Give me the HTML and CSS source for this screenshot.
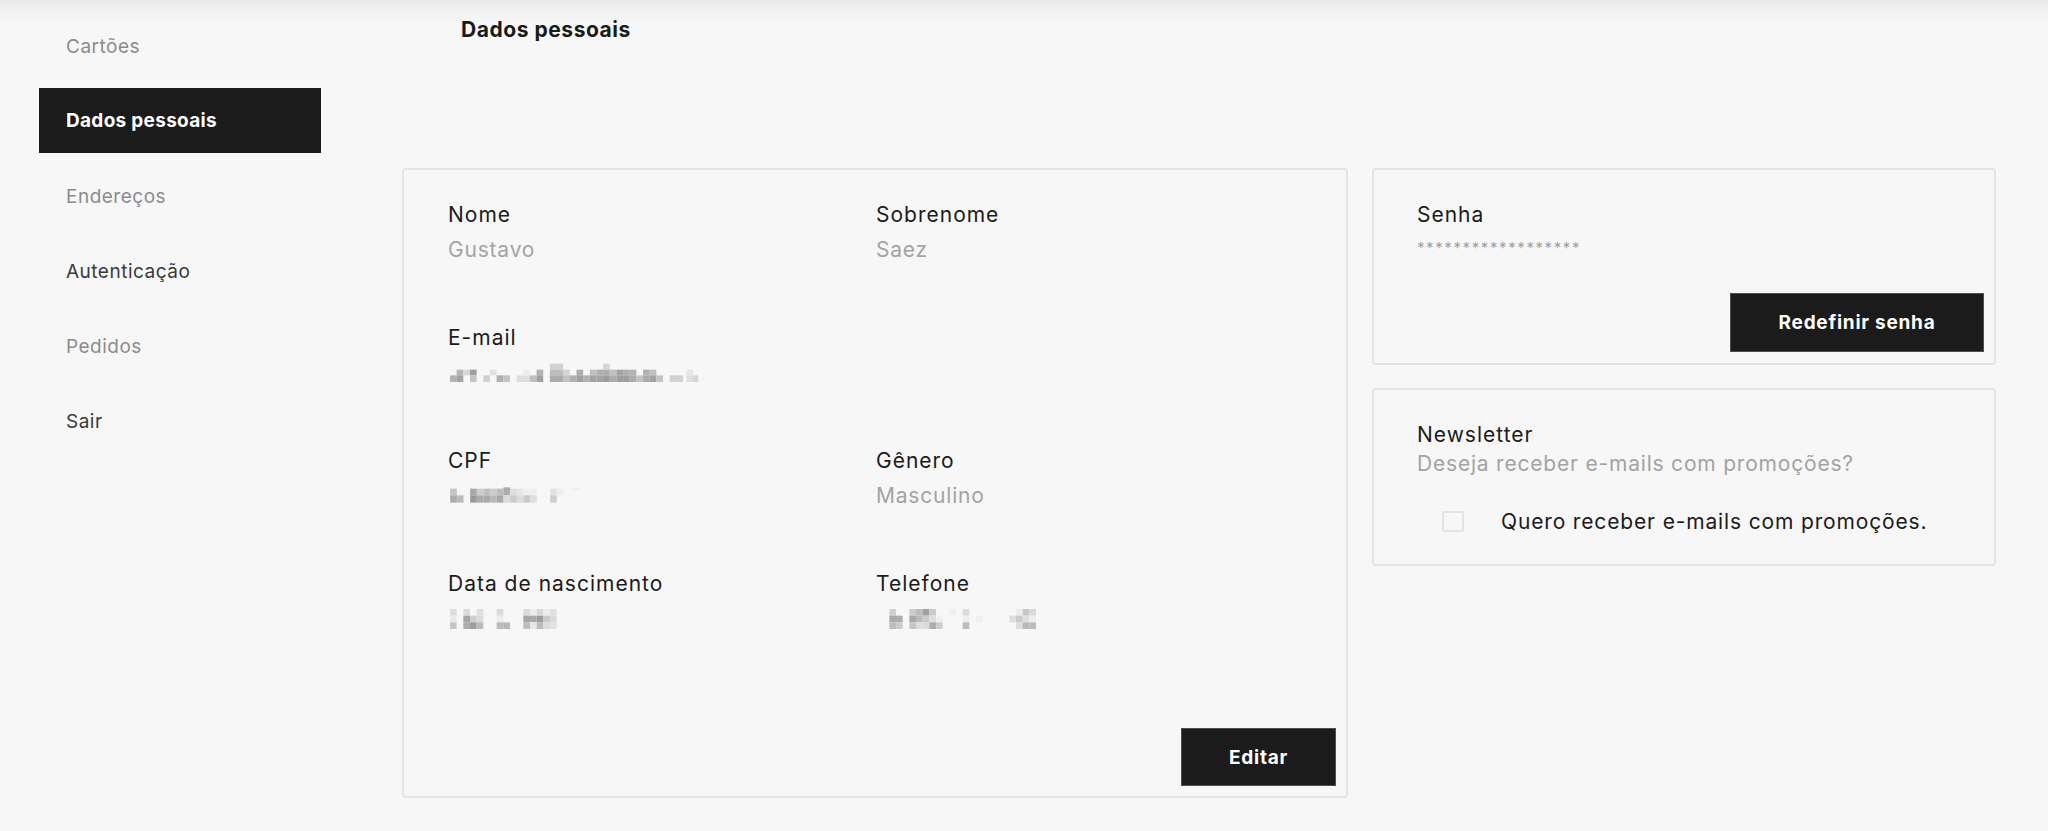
FILE: index.html
```html
<!DOCTYPE html>
<html lang="pt-BR">
<head>
<meta charset="utf-8">
<title>Dados pessoais</title>
<link rel="stylesheet" href="styles.css">
</head>
<body>
<div class="page">
  <nav class="sidebar">
    <a class="nav-item muted">Cartões</a>
    <a class="nav-item active">Dados pessoais</a>
    <a class="nav-item muted">Endereços</a>
    <a class="nav-item">Autenticação</a>
    <a class="nav-item muted">Pedidos</a>
    <a class="nav-item">Sair</a>
  </nav>
  <main class="content">
    <h1 class="title">Dados pessoais</h1>
    <div class="cards">
      <section class="card card-main">
        <div class="fields">
          <div class="field">
            <div class="label">Nome</div>
            <div class="value">Gustavo</div>
          </div>
          <div class="field">
            <div class="label">Sobrenome</div>
            <div class="value">Saez</div>
          </div>
          <div class="field field-wide">
            <div class="label">E-mail</div>
            <div class="value">
              <svg class="mosaic" width="253" height="20" viewBox="24 20 760 60">
                <rect x="30" y="57" width="20" height="20" fill="#b3b3b3"/>
                <rect x="50" y="40" width="20" height="17" fill="#b5b5b5"/>
                <rect x="50" y="57" width="20" height="20" fill="#a3a3a3"/>
                <rect x="70" y="40" width="20" height="17" fill="#d6d6d6"/>
                <rect x="90" y="40" width="20" height="17" fill="#9f9f9f"/>
                <rect x="90" y="57" width="20" height="20" fill="#c4c4c4"/>
                <rect x="130" y="57" width="20" height="20" fill="#d0d0d0"/>
                <rect x="150" y="40" width="20" height="17" fill="#e2e2e2"/>
                <rect x="170" y="57" width="20" height="20" fill="#b0b0b0"/>
                <rect x="190" y="57" width="20" height="20" fill="#c3c3c3"/>
                <rect x="230" y="57" width="40" height="20" fill="#dedede"/>
                <rect x="250" y="40" width="20" height="17" fill="#ececec"/>
                <rect x="270" y="57" width="20" height="20" fill="#c0c0c0"/>
                <rect x="290" y="40" width="20" height="17" fill="#b2b2b2"/>
                <rect x="290" y="57" width="20" height="20" fill="#a0a0a0"/>
                <rect x="330" y="22" width="40" height="18" fill="#d2d2d2"/>
                <rect x="330" y="40" width="40" height="17" fill="#bdbdbd"/>
                <rect x="330" y="57" width="40" height="20" fill="#acacac"/>
                <rect x="370" y="40" width="20" height="17" fill="#d4d4d4"/>
                <rect x="370" y="57" width="20" height="20" fill="#c2c2c2"/>
                <rect x="390" y="57" width="20" height="20" fill="#b0b0b0"/>
                <rect x="410" y="40" width="20" height="17" fill="#adadad"/>
                <rect x="410" y="57" width="20" height="20" fill="#a0a0a0"/>
                <rect x="430" y="57" width="20" height="20" fill="#b2b2b2"/>
                <rect x="450" y="40" width="20" height="17" fill="#c0c0c0"/>
                <rect x="450" y="57" width="20" height="20" fill="#a2a2a2"/>
                <rect x="470" y="40" width="20" height="17" fill="#b0b0b0"/>
                <rect x="470" y="57" width="20" height="20" fill="#a4a4a4"/>
                <rect x="490" y="22" width="20" height="18" fill="#d6d6d6"/>
                <rect x="490" y="40" width="20" height="17" fill="#adadad"/>
                <rect x="490" y="57" width="20" height="20" fill="#9c9c9c"/>
                <rect x="510" y="40" width="20" height="17" fill="#c0c0c0"/>
                <rect x="510" y="57" width="20" height="20" fill="#acacac"/>
                <rect x="530" y="40" width="20" height="17" fill="#a4a4a4"/>
                <rect x="530" y="57" width="20" height="20" fill="#9e9e9e"/>
                <rect x="550" y="40" width="20" height="17" fill="#b0b0b0"/>
                <rect x="550" y="57" width="20" height="20" fill="#a0a0a0"/>
                <rect x="570" y="40" width="20" height="17" fill="#b3b3b3"/>
                <rect x="570" y="57" width="20" height="20" fill="#ababab"/>
                <rect x="590" y="57" width="20" height="20" fill="#c2c2c2"/>
                <rect x="610" y="40" width="20" height="17" fill="#b0b0b0"/>
                <rect x="610" y="57" width="20" height="20" fill="#aaaaaa"/>
                <rect x="630" y="40" width="20" height="17" fill="#c0c0c0"/>
                <rect x="630" y="57" width="20" height="20" fill="#a3a3a3"/>
                <rect x="650" y="57" width="20" height="20" fill="#c4c4c4"/>
                <rect x="690" y="57" width="40" height="20" fill="#d2d2d2"/>
                <rect x="740" y="40" width="20" height="17" fill="#e6e6e6"/>
                <rect x="740" y="57" width="20" height="20" fill="#e0e0e0"/>
                <rect x="760" y="57" width="16" height="20" fill="#d4d4d4"/>
              </svg>
            </div>
          </div>
          <div class="field">
            <div class="label">CPF</div>
            <div class="value">
              <svg class="mosaic" width="137" height="20" viewBox="24 22 410 60">
                <rect x="30" y="30" width="20" height="20" fill="#c4c4c4"/>
                <rect x="30" y="50" width="20" height="22" fill="#acacac"/>
                <rect x="50" y="50" width="20" height="22" fill="#bcbcbc"/>
                <rect x="90" y="30" width="20" height="20" fill="#a8a8a8"/>
                <rect x="90" y="50" width="20" height="22" fill="#9a9a9a"/>
                <rect x="110" y="30" width="20" height="20" fill="#cdcdcd"/>
                <rect x="110" y="50" width="20" height="22" fill="#ababab"/>
                <rect x="130" y="30" width="20" height="20" fill="#bebebe"/>
                <rect x="130" y="50" width="20" height="22" fill="#aaaaaa"/>
                <rect x="150" y="30" width="20" height="20" fill="#cccccc"/>
                <rect x="150" y="50" width="20" height="22" fill="#b8b8b8"/>
                <rect x="170" y="30" width="20" height="20" fill="#bdbdbd"/>
                <rect x="170" y="50" width="20" height="22" fill="#a9a9a9"/>
                <rect x="190" y="26" width="20" height="24" fill="#adadad"/>
                <rect x="190" y="50" width="20" height="22" fill="#dcdcdc"/>
                <rect x="210" y="30" width="20" height="20" fill="#dddddd"/>
                <rect x="210" y="50" width="20" height="22" fill="#cbcbcb"/>
                <rect x="230" y="30" width="20" height="20" fill="#e6e6e6"/>
                <rect x="230" y="50" width="20" height="22" fill="#dcdcdc"/>
                <rect x="250" y="30" width="20" height="20" fill="#eeeeee"/>
                <rect x="250" y="50" width="20" height="22" fill="#cacaca"/>
                <rect x="270" y="30" width="20" height="20" fill="#eeeeee"/>
                <rect x="270" y="50" width="20" height="22" fill="#dedede"/>
                <rect x="330" y="30" width="20" height="20" fill="#e2e2e2"/>
                <rect x="330" y="50" width="20" height="22" fill="#cecece"/>
                <rect x="350" y="30" width="20" height="20" fill="#efefef"/>
                <rect x="390" y="26" width="30" height="8" fill="#f0f0f0"/>
              </svg>
            </div>
          </div>
          <div class="field">
            <div class="label">Gênero</div>
            <div class="value">Masculino</div>
          </div>
          <div class="field">
            <div class="label">Data de nascimento</div>
            <div class="value">
              <svg class="mosaic" width="111" height="20" viewBox="24 27 333 60">
                <rect x="30" y="27" width="20" height="20" fill="#dcdcdc"/>
                <rect x="30" y="47" width="20" height="20" fill="#eaeaea"/>
                <rect x="30" y="67" width="20" height="20" fill="#c6c6c6"/>
                <rect x="70" y="27" width="20" height="20" fill="#dadada"/>
                <rect x="70" y="47" width="20" height="20" fill="#a6a6a6"/>
                <rect x="70" y="67" width="20" height="20" fill="#acacac"/>
                <rect x="90" y="47" width="20" height="20" fill="#cfcfcf"/>
                <rect x="90" y="67" width="20" height="20" fill="#9e9e9e"/>
                <rect x="110" y="27" width="20" height="20" fill="#dedede"/>
                <rect x="110" y="47" width="20" height="20" fill="#dadada"/>
                <rect x="110" y="67" width="20" height="20" fill="#bababa"/>
                <rect x="170" y="27" width="20" height="20" fill="#dadada"/>
                <rect x="170" y="47" width="20" height="20" fill="#ececec"/>
                <rect x="170" y="67" width="20" height="20" fill="#bbbbbb"/>
                <rect x="190" y="67" width="20" height="20" fill="#b8b8b8"/>
                <rect x="250" y="27" width="20" height="20" fill="#dadada"/>
                <rect x="250" y="47" width="20" height="20" fill="#a6a6a6"/>
                <rect x="250" y="67" width="20" height="20" fill="#bcbcbc"/>
                <rect x="270" y="27" width="20" height="20" fill="#ececec"/>
                <rect x="270" y="47" width="20" height="20" fill="#a9a9a9"/>
                <rect x="270" y="67" width="20" height="20" fill="#e8e8e8"/>
                <rect x="290" y="27" width="20" height="20" fill="#d8d8d8"/>
                <rect x="290" y="47" width="20" height="20" fill="#9e9e9e"/>
                <rect x="290" y="67" width="20" height="20" fill="#bababa"/>
                <rect x="310" y="27" width="20" height="20" fill="#ececec"/>
                <rect x="310" y="47" width="20" height="20" fill="#cacaca"/>
                <rect x="310" y="67" width="20" height="20" fill="#dddddd"/>
                <rect x="330" y="27" width="20" height="20" fill="#e0e0e0"/>
                <rect x="330" y="47" width="20" height="20" fill="#dcdcdc"/>
                <rect x="330" y="67" width="20" height="20" fill="#e2e2e2"/>
              </svg>
            </div>
          </div>
          <div class="field">
            <div class="label">Telefone</div>
            <div class="value">
              <svg class="mosaic" width="160" height="20" viewBox="0 27 480 60">
                <rect x="40" y="27" width="20" height="20" fill="#cfcfcf"/>
                <rect x="40" y="47" width="20" height="20" fill="#a9a9a9"/>
                <rect x="40" y="67" width="20" height="20" fill="#bebebe"/>
                <rect x="60" y="47" width="20" height="20" fill="#adadad"/>
                <rect x="60" y="67" width="20" height="20" fill="#cccccc"/>
                <rect x="100" y="27" width="20" height="20" fill="#cccccc"/>
                <rect x="100" y="47" width="20" height="20" fill="#a9a9a9"/>
                <rect x="100" y="67" width="20" height="20" fill="#c6c6c6"/>
                <rect x="120" y="27" width="20" height="20" fill="#bdbdbd"/>
                <rect x="120" y="47" width="20" height="20" fill="#bababa"/>
                <rect x="120" y="67" width="20" height="20" fill="#dcdcdc"/>
                <rect x="140" y="27" width="20" height="20" fill="#a0a0a0"/>
                <rect x="140" y="47" width="20" height="20" fill="#cacaca"/>
                <rect x="140" y="67" width="20" height="20" fill="#dadada"/>
                <rect x="160" y="27" width="20" height="20" fill="#cacaca"/>
                <rect x="160" y="47" width="20" height="20" fill="#dedede"/>
                <rect x="160" y="67" width="20" height="20" fill="#adadad"/>
                <rect x="180" y="47" width="20" height="20" fill="#eeeeee"/>
                <rect x="180" y="67" width="20" height="20" fill="#cdcdcd"/>
                <rect x="220" y="27" width="20" height="20" fill="#efefef"/>
                <rect x="260" y="27" width="20" height="20" fill="#dcdcdc"/>
                <rect x="260" y="47" width="20" height="20" fill="#eeeeee"/>
                <rect x="260" y="67" width="20" height="20" fill="#bcbcbc"/>
                <rect x="300" y="47" width="20" height="20" fill="#efefef"/>
                <rect x="400" y="47" width="20" height="20" fill="#dddddd"/>
                <rect x="420" y="27" width="20" height="20" fill="#ececec"/>
                <rect x="420" y="47" width="20" height="20" fill="#c9c9c9"/>
                <rect x="420" y="67" width="20" height="20" fill="#dcdcdc"/>
                <rect x="440" y="27" width="20" height="20" fill="#c8c8c8"/>
                <rect x="440" y="47" width="20" height="20" fill="#dddddd"/>
                <rect x="440" y="67" width="20" height="20" fill="#bababa"/>
                <rect x="460" y="27" width="20" height="20" fill="#dadada"/>
                <rect x="460" y="47" width="20" height="20" fill="#eeeeee"/>
                <rect x="460" y="67" width="20" height="20" fill="#bcbcbc"/>
              </svg>
            </div>
          </div>
        </div>
        <button class="btn btn-edit" type="button">Editar</button>
      </section>
      <div class="side">
        <section class="card card-pass">
          <div class="label">Senha</div>
          <div class="stars">******************</div>
          <button class="btn btn-reset" type="button">Redefinir senha</button>
        </section>
        <section class="card card-news">
          <div class="label">Newsletter</div>
          <div class="value">Deseja receber e-mails com promoções?</div>
          <label class="check-row">
            <span class="checkbox"></span>
            <span class="check-text">Quero receber e-mails com promoções.</span>
          </label>
        </section>
      </div>
    </div>
  </main>
</div>
</body>
</html>
```

FILE: styles.css
```css
* { box-sizing: border-box; }

html, body {
  margin: 0;
  padding: 0;
}

body {
  background: #f7f7f7 linear-gradient(to bottom, #e9e9e9 0, #f1f1f1 10px, #f7f7f7 24px) no-repeat;
  font-family: Inter, "Open Sans", "DejaVu Sans", sans-serif;
  color: #1b1b1b;
  height: 831px;
  overflow: hidden;
}

.page {
  display: flex;
  align-items: flex-start;
}

/* Sidebar */
.sidebar {
  width: 321px;
  padding: 14px 0 0 39px;
  display: flex;
  flex-direction: column;
  gap: 10px;
  flex-shrink: 0;
}

.nav-item {
  height: 65px;
  display: flex;
  align-items: center;
  padding-left: 27px;
  font-size: 19px;
  letter-spacing: 0.5px;
  color: #3a3a3a;
  text-decoration: none;
}

.nav-item.muted { color: #8c8c8c; }

.nav-item.active {
  margin-top: -1px;
  background: #1b1b1b;
  color: #ffffff;
  font-weight: 700;
  letter-spacing: 0.3px;
}

.nav-item.active + .nav-item { margin-top: 1px; }

/* Content */
.content {
  margin-left: 81px;
  display: flex;
  flex-direction: column;
}

.title {
  margin: 18px 0 126px 59px;
  font-size: 21px;
  line-height: 24px;
  font-weight: 700;
  letter-spacing: 0.55px;
  color: #1b1b1b;
}

.cards {
  display: flex;
  gap: 24px;
  align-items: flex-start;
}

.card {
  border: 2px solid #e4e4e4;
  border-radius: 4px;
  background: #f7f7f7;
  display: flex;
  flex-direction: column;
}

.card-main {
  width: 946px;
  height: 630px;
  padding: 33px 10px 10px 44px;
}

.fields {
  display: grid;
  grid-template-columns: 428px 428px;
  row-gap: 64px;
}

.field-wide { grid-column: 1 / span 2; }

.label {
  font-size: 21px;
  line-height: 24px;
  letter-spacing: 1px;
  color: #1b1b1b;
}

.value {
  margin-top: 11px;
  font-size: 21px;
  line-height: 24px;
  letter-spacing: 0.8px;
  color: #a3a3a3;
  height: 24px;
  display: flex;
  align-items: center;
}

.mosaic { display: block; }

.btn {
  background: #1b1b1b;
  color: #ffffff;
  border: 1px solid #4d4d4d;
  font-family: inherit;
  font-weight: 700;
  font-size: 19px;
  letter-spacing: 0.75px;
  align-self: flex-end;
  cursor: pointer;
}

.btn-edit {
  margin-top: auto;
  width: 155px;
  height: 58px;
}

.side {
  width: 624px;
  display: flex;
  flex-direction: column;
  gap: 23px;
}

.card-pass {
  padding: 33px 10px 11px 43px;
}

.stars {
  margin-top: 10px;
  font-size: 15px;
  line-height: 18px;
  letter-spacing: 1.6px;
  color: #a0a0a0;
  padding-top: 2px;
  height: 20px;
}

.btn-reset {
  margin-top: 36px;
  width: 254px;
  height: 59px;
}

.card-news {
  padding: 33px 10px 31px 43px;
}

.card-news .value { margin-top: 5px; }

.check-row {
  margin-top: 33px;
  margin-left: 25px;
  display: flex;
  align-items: center;
  height: 24px;
}

.checkbox {
  width: 22px;
  height: 21px;
  border: 2px solid #e3e3e3;
  border-radius: 2px;
  flex-shrink: 0;
}

.check-text {
  margin-left: 37px;
  font-size: 21px;
  letter-spacing: 0.85px;
  color: #1b1b1b;
}
```
